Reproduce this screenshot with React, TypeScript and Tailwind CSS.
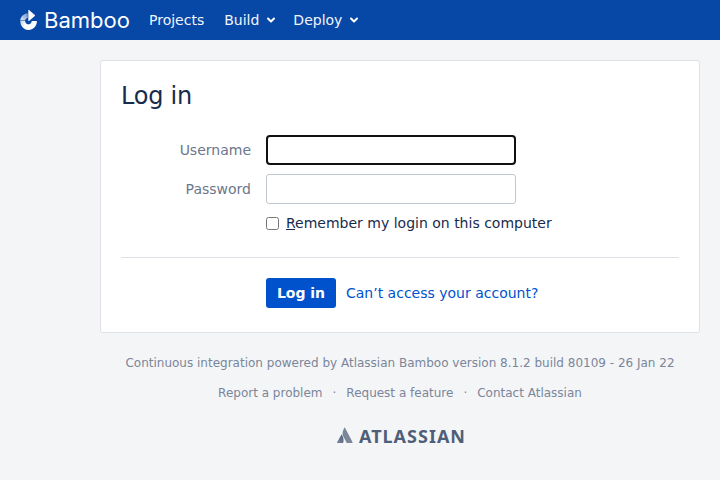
import React from 'react';

function BambooLogo() {
  return (
    <svg width="112" height="32" viewBox="0 -4 112 32" className="overflow-visible" role="img" aria-label="Bamboo">
      <defs>
        <linearGradient id="leaf" x1="1" y1="0" x2="0" y2="1">
          <stop offset="0" stopColor="#fff" stopOpacity="0.4" />
          <stop offset="1" stopColor="#fff" stopOpacity="0.9" />
        </linearGradient>
        <linearGradient id="stem" x1="0" y1="0" x2="1" y2="0.300">
          <stop offset="0" stopColor="#fff" stopOpacity="0.75" />
          <stop offset="0.400" stopColor="#fff" />
        </linearGradient>
      </defs>
      <path d="M8.300 2.400c0-.4.400-.5.700-.3l5.800 5c.3.300.3.600 0 .9L9 13c-.3.200-.7.100-.7-.3z" fill="#fff" />
      <path d="M7.700 5.200v4.900c-1.300.3-2.200 1.100-2.600 2.300H.3c.4-4 3.300-6.800 7.400-7.200z" fill="url(#leaf)" />
      <path d="M.3 13.100h4.800c.1 2 1.500 3.300 3.300 3.300s3.200-1.300 3.400-3.300h4.600c.3 0 .5.200.5.500-.2 4.700-3.700 8.300-8.500 8.300C3.700 21.900.3 18.200.3 13.100z" fill="url(#stem)" />
      <text x="24" y="20" textLength="86" lengthAdjust="spacingAndGlyphs" fill="#fff" className="font-['Inter',sans-serif] text-[21px] font-normal">Bamboo</text>
    </svg>
  );
}

function Chevron() {
  return (
    <svg width="10" height="8" viewBox="0 0 10 8" fill="none" stroke="#fff" strokeWidth="2" strokeLinecap="round" strokeLinejoin="round" aria-hidden="true">
      <path d="M2 2.500l3 3 3-3" />
    </svg>
  );
}

function AtlassianLogo() {
  return (
    <svg width="130" height="28" viewBox="-1.500 -4.500 130 28" className="overflow-visible" role="img" aria-label="Atlassian">
      <defs>
        <linearGradient id="fold" x1="1" y1="0" x2="0" y2="1">
          <stop offset="0" stopColor="#505f79" />
          <stop offset="1" stopColor="#7a869a" />
        </linearGradient>
      </defs>
      <path d="M4.700 8.400c.2-.4.600-.4.800 0 1.400 2.400 1.900 4.700 1.300 7.500 0 .4-.3.600-.7.600H1c-.4 0-.6-.3-.4-.7z" fill="url(#fold)" />
      <path d="M7.800 1.400c.2-.4.600-.4.800 0l7.500 14.400c.2.400 0 .7-.4.700h-4.900c-.4 0-.6-.1-.8-.5L6.400 9.200C5.600 6.600 6.200 4.100 7.800 1.400z" fill="#7a869a" />
      <text x="22.500" y="16.500" textLength="106" lengthAdjust="spacing" fill="#505f79" className="font-['Noto_Sans',sans-serif] text-[18px] font-bold">ATLASSIAN</text>
    </svg>
  );
}

export default function App() {
  return (
    <div className="h-[480px] w-[720px] overflow-hidden bg-[#f4f5f7] font-['DejaVu_Sans',sans-serif] text-sm leading-5 text-[#172b4d]">
      <header className="flex h-10 items-center bg-[#0747a6] pl-5 text-[#f0f5ff]">
        <BambooLogo />
        <nav className="ml-[17px] flex items-center">
          <a href="#" className="mr-5">Projects</a>
          <a href="#" className="mr-[17px] flex items-center gap-[7px]">Build <Chevron /></a>
          <a href="#" className="flex items-center gap-[7px]">Deploy <Chevron /></a>
        </nav>
      </header>
      <div className="ml-[100px] w-[600px] pt-5">
        <main className="h-[273px] rounded-[3px] border border-[#dfe1e6] bg-white px-5 pt-[21px]">
          <h1 className="text-2xl leading-7 tracking-[-0.01em]">Log in</h1>
          <form onSubmit={(e) => e.preventDefault()}>
            <div className="mt-[25px] flex h-[30px] items-center">
              <label htmlFor="user" className="mr-[15px] w-[130px] text-right text-[#6b778c]">Username</label>
              <input id="user" className="h-[30px] w-[250px] rounded-[4px] border-2 border-[#101010] bg-white px-1 outline-none" />
            </div>
            <div className="mt-[9px] flex h-[30px] items-center">
              <label htmlFor="pass" className="mr-[15px] w-[130px] text-right text-[#6b778c]">Password</label>
              <input id="pass" type="password" className="h-[30px] w-[250px] rounded-[3px] border border-[#c1c7d0] bg-white px-1 outline-none" />
            </div>
            <label className="mt-[9px] ml-[145px] flex h-5 items-center gap-[7px]">
              <input type="checkbox" className="size-[13px]" />
              <span><u>R</u>emember my login on this computer</span>
            </label>
            <div className="mt-6 flex items-center gap-2.5 border-t border-[#dfe1e6] pt-5 pl-[145px]">
              <button type="submit" className="h-[30px] w-[70px] rounded-[3px] bg-[#0052cc] font-bold text-white">Log in</button>
              <a href="#" className="text-[#0052cc]">Can’t access your account?</a>
            </div>
          </form>
        </main>
        <footer className="flex flex-col items-center pt-5 text-xs leading-5 text-[#7a869a]">
          <p className="whitespace-nowrap">Continuous integration powered by Atlassian Bamboo version 8.1.2 build 80109 - 26 Jan 22</p>
          <div className="mt-2.5 mb-[19px] flex gap-[10px]">
            <a href="#">Report a problem</a><span>·</span>
            <a href="#">Request a feature</a><span>·</span>
            <a href="#">Contact Atlassian</a>
          </div>
          <AtlassianLogo />
        </footer>
      </div>
    </div>
  );
}
